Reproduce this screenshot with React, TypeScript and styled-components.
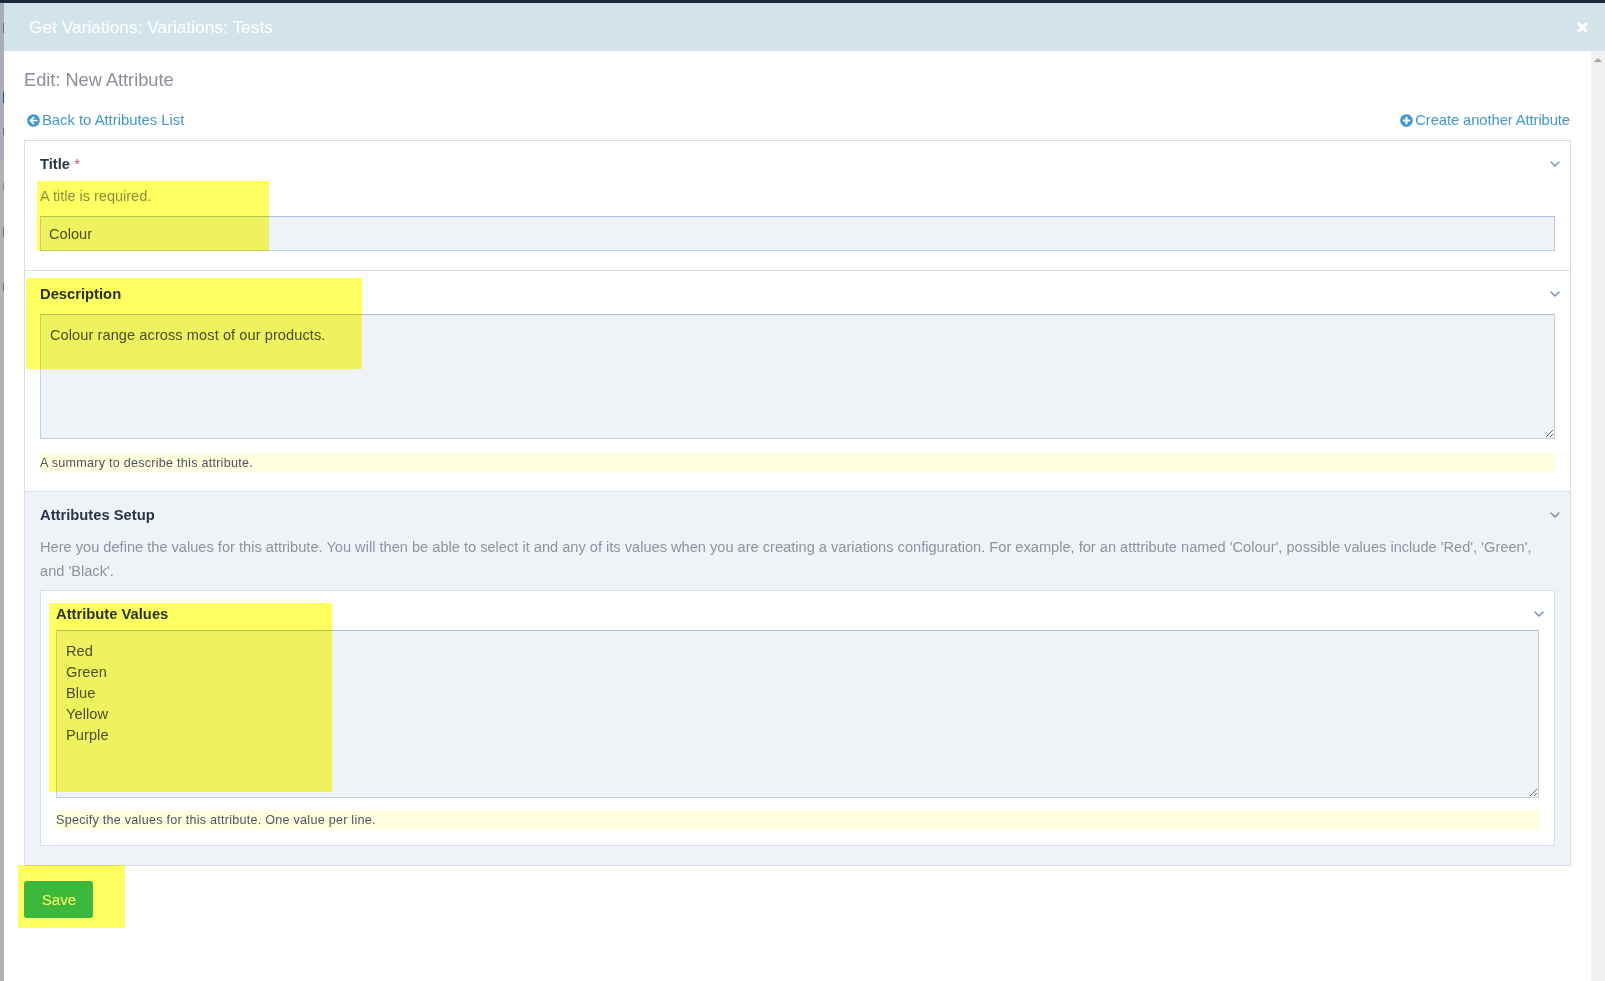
import * as React from "react";
import styled, { createGlobalStyle } from "styled-components";
import { FaArrowCircleLeft, FaPlusCircle, FaTimes } from "react-icons/fa";
import { ChevronDown } from "lucide-react";

const GlobalStyle = createGlobalStyle`
  html, body {
    margin: 0;
    padding: 0;
    overflow: hidden;
  }
  * {
    box-sizing: border-box;
  }
`;

export default function App() {
  return (
    <Page>
      <GlobalStyle />
      <TopBar />
      <Backdrop>
        <BackdropMark $top={20} $height={10} $color="#7d6a5a" />
        <BackdropMark $top={89} $height={11} $color="#2f4f80" />
        <BackdropMark $top={125} $height={7} $color="#6a6e76" />
        <BackdropMark $top={180} $height={7} $color="#7a7e86" />
        <BackdropMark $top={224} $height={10} $color="#7d6a5a" />
        <BackdropMark $top={280} $height={8} $color="#6a6e76" />
      </Backdrop>
      <Modal>
        <ModalHeader>
          <ModalTitle>Get Variations: Variations: Tests</ModalTitle>
          <CloseButton>
            <FaTimes size={15} />
          </CloseButton>
        </ModalHeader>
        <ModalBody>
          <Content>
            <PageTitle>Edit: New Attribute</PageTitle>
            <LinkRow>
              <ActionLink>
                <FaArrowCircleLeft size={13} />
                Back to Attributes List
              </ActionLink>
              <ActionLink $spacing={-0.1}>
                <FaPlusCircle size={13} />
                Create another Attribute
              </ActionLink>
            </LinkRow>
            <FormCard>
              <Section>
                <FieldHead>
                  <FieldLabel>
                    Title <Required>*</Required>
                  </FieldLabel>
                  <Chevron />
                </FieldHead>
                <Instructions>A title is required.</Instructions>
                <TextInput defaultValue="Colour" />
              </Section>
              <Section>
                <FieldHead>
                  <FieldLabel>Description</FieldLabel>
                  <Chevron />
                </FieldHead>
                <TextArea $height={125} defaultValue="Colour range across most of our products." />
                <Hint>A summary to describe this attribute.</Hint>
              </Section>
              <SetupSection>
                <FieldHead>
                  <FieldLabel>Attributes Setup</FieldLabel>
                  <Chevron />
                </FieldHead>
                <SetupText>
                  Here you define the values for this attribute. You will then be able to select it and any of its
                  values when you are creating a variations configuration. For example, for an atttribute named
                  'Colour', possible values include 'Red', 'Green', and 'Black'.
                </SetupText>
                <InnerCard>
                  <FieldHead>
                    <FieldLabel>Attribute Values</FieldLabel>
                    <Chevron />
                  </FieldHead>
                  <TextArea $height={168} defaultValue={"Red\nGreen\nBlue\nYellow\nPurple"} />
                  <Hint>Specify the values for this attribute. One value per line.</Hint>
                </InnerCard>
              </SetupSection>
            </FormCard>
            <SaveButton>Save</SaveButton>
          </Content>
          <Scrollbar>
            <ScrollArrow />
          </Scrollbar>
        </ModalBody>
      </Modal>
      <Highlight $x={37} $y={181} $w={232} $h={70} />
      <Highlight $x={26} $y={278} $w={336} $h={91} />
      <Highlight $x={49} $y={603} $w={283} $h={189} />
      <Highlight $x={18} $y={865} $w={107} $h={63} />
    </Page>
  );
}

const Page = styled.div`
  position: relative;
  width: 1605px;
  height: 981px;
  overflow: hidden;
  display: flex;
  flex-direction: column;
  background: #adb2bb;
  font-family: "Liberation Sans", Arial, sans-serif;
`;

const TopBar = styled.div`
  height: 3px;
  flex-shrink: 0;
  background: #1b2a3b;
`;

const Backdrop = styled.div`
  position: absolute;
  left: 0;
  top: 3px;
  width: 4px;
  height: 978px;
  background: linear-gradient(#a9adb7 157px, #aeb3ba 157px);
`;

const BackdropMark = styled.div<{ $top: number; $height: number; $color: string }>`
  position: absolute;
  right: 0;
  top: ${(p) => p.$top}px;
  width: 1px;
  height: ${(p) => p.$height}px;
  background: ${(p) => p.$color};
`;

const Modal = styled.div`
  flex: 1;
  margin-left: 4px;
  display: flex;
  flex-direction: column;
  min-height: 0;
`;

const ModalHeader = styled.div`
  height: 48px;
  flex-shrink: 0;
  display: flex;
  align-items: center;
  justify-content: space-between;
  padding: 0 15px 0 25px;
  background: #d2e3ea;
  color: #fff;
`;

const ModalTitle = styled.div`
  font-size: 17.35px;
`;

const CloseButton = styled.div`
  display: flex;
  color: #fff;
`;

const ModalBody = styled.div`
  flex: 1;
  display: flex;
  min-height: 0;
  background: #fff;
`;

const Content = styled.div`
  flex: 1;
  min-width: 0;
  padding: 0 20px;
`;

const PageTitle = styled.div`
  height: 56px;
  padding-top: 17px;
  line-height: 24px;
  font-size: 18.2px;
  color: #8b8f9b;
`;

const LinkRow = styled.div`
  height: 33px;
  padding: 1px 1px 0 3px;
  display: flex;
  justify-content: space-between;
  align-items: flex-start;
`;

const ActionLink = styled.a<{ $spacing?: number }>`
  display: flex;
  align-items: center;
  gap: 2px;
  height: 24px;
  font-size: 14.8px;
  letter-spacing: ${(p) => p.$spacing ?? 0}px;
  color: #4397cb;
`;

const FormCard = styled.div`
  border: 1px solid #d5dfea;
`;

const Section = styled.div`
  padding: 13px 15px 19px;
  & + & {
    border-top: 1px solid #d5dfea;
  }
`;

const SetupSection = styled(Section)`
  border-top: 1px solid #d5dfea;
  background: #eff2f7;
`;

const FieldHead = styled.div`
  display: flex;
  align-items: center;
  justify-content: space-between;
  height: 20px;
  margin-right: -8px;
`;

const FieldLabel = styled.div`
  font-size: 14.75px;
  font-weight: bold;
  color: #283548;
`;

const Required = styled.span`
  color: #d0506a;
  font-weight: normal;
`;

const Chevron = styled(ChevronDown).attrs({ size: 16, strokeWidth: 1.8 })`
  color: #6f86a8;
`;

const Instructions = styled.div`
  margin-top: 12px;
  line-height: 20px;
  font-size: 14.5px;
  color: #8b8f9b;
`;

const TextInput = styled.input`
  display: block;
  width: 100%;
  height: 35px;
  margin-top: 10px;
  padding: 0 8px;
  border: 1px solid #c3d2e3;
  border-top-color: #aec3da;
  background: #eff2f7;
  font-family: inherit;
  font-size: 14.6px;
  color: #4a505c;
  outline: none;
`;

const TextArea = styled.textarea<{ $height: number }>`
  display: block;
  width: 100%;
  height: ${(p) => p.$height}px;
  margin-top: 10px;
  padding: 10px 9px 9px;
  border: 1px solid #c3d2e3;
  border-top-color: #aec3da;
  border-radius: 0;
  background: #eff2f7;
  font-family: inherit;
  font-size: 14.6px;
  letter-spacing: 0.07px;
  line-height: 21px;
  color: #4a505c;
  outline: none;
  resize: vertical;
`;

const Hint = styled.div`
  margin-top: 14px;
  height: 19px;
  line-height: 20px;
  background: #ffffe0;
  font-size: 12.6px;
  letter-spacing: 0.25px;
  color: #4f5560;
`;

const SetupText = styled.div`
  margin-top: 10px;
  line-height: 24px;
  font-size: 14.62px;
  color: #8f939e;
`;

const InnerCard = styled.div`
  margin-top: 7px;
  padding: 13px 15px 16px;
  border: 1px solid #d5dfea;
  background: #fff;
  ${TextArea} {
    margin-top: 6px;
  }
  ${Hint} {
    margin-top: 12px;
  }
`;

const SaveButton = styled.button`
  display: block;
  width: 69px;
  height: 37px;
  margin-top: 15px;
  padding: 0 0 0 1px;
  border: 0;
  border-radius: 3px;
  background: #3cb89e;
  font-family: inherit;
  font-size: 15.2px;
  color: #fff;
`;

const Scrollbar = styled.div`
  width: 14px;
  flex-shrink: 0;
  background: #f1f1f1;
  display: flex;
  justify-content: center;
  padding-top: 7px;
`;

const ScrollArrow = styled.div`
  width: 0;
  height: 0;
  border-left: 4px solid transparent;
  border-right: 4px solid transparent;
  border-bottom: 4px solid #a3a3a3;
`;

const Highlight = styled.div<{ $x: number; $y: number; $w: number; $h: number }>`
  position: absolute;
  left: ${(p) => p.$x}px;
  top: ${(p) => p.$y}px;
  width: ${(p) => p.$w}px;
  height: ${(p) => p.$h}px;
  background: #ffff62;
  mix-blend-mode: multiply;
  pointer-events: none;
`;
